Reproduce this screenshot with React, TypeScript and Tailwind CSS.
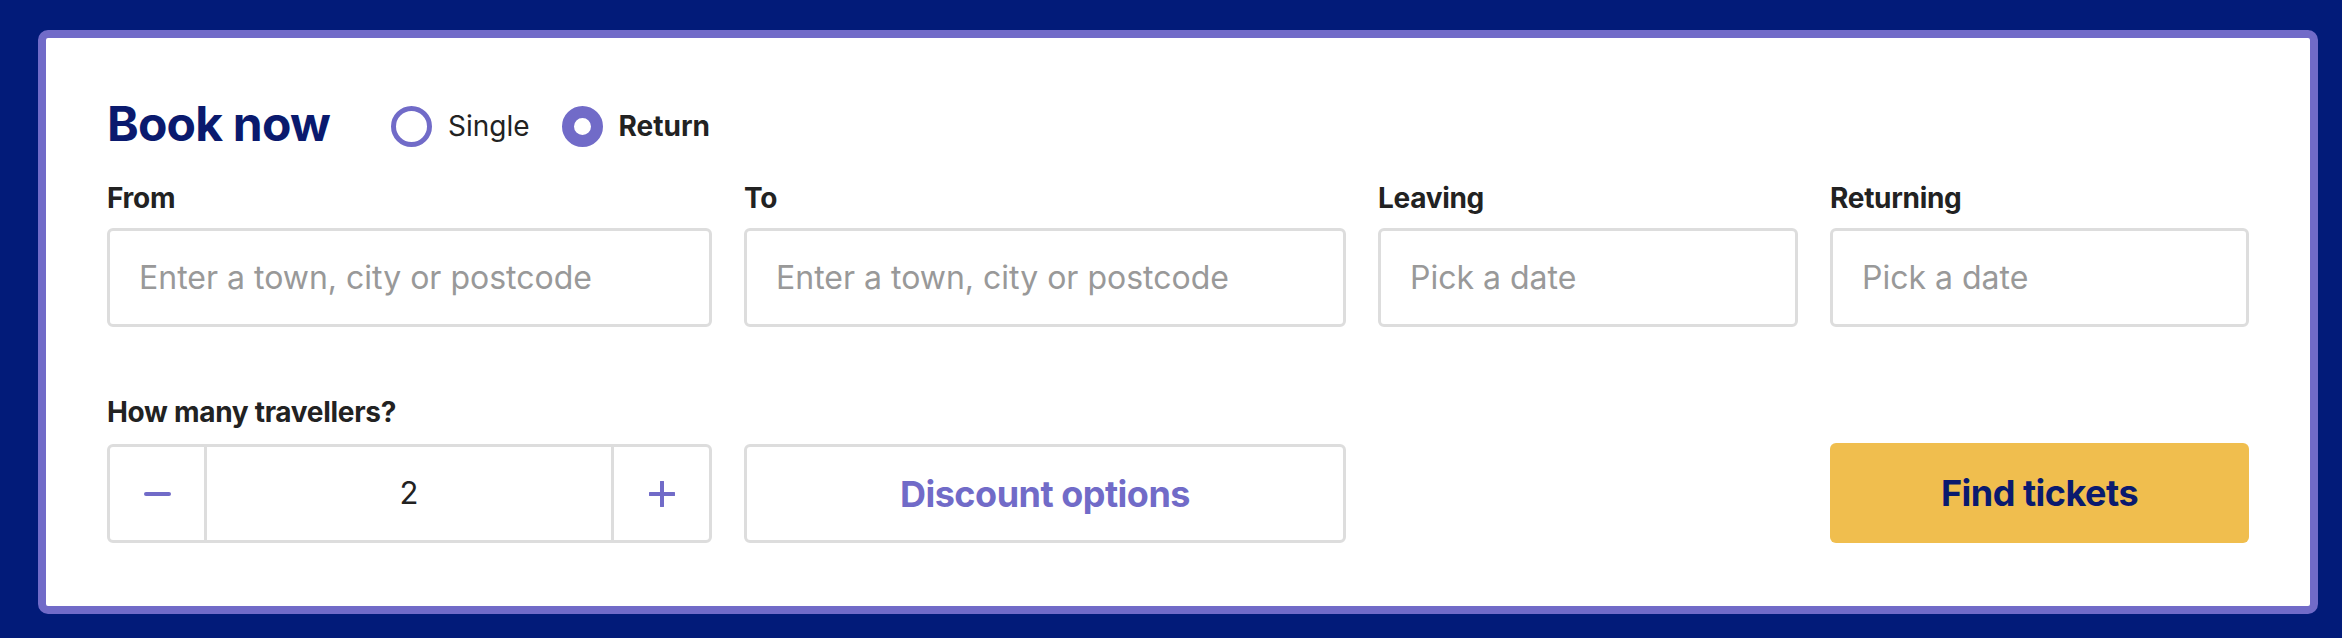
import { useState } from "react";

const font = { fontFamily: "Inter, 'Noto Sans', sans-serif" };

function Radio({ label, checked, onClick }: { label: string; checked: boolean; onClick: () => void }) {
  return (
    <button type="button" onClick={onClick} className="flex items-center gap-[16px]">
      <span
        className={`block h-[41px] w-[41px] rounded-full border-[#716BC8] bg-white ${
          checked ? "border-[12px]" : "border-[5px]"
        }`}
      />
      <span className={`text-[28px] leading-none text-[#222] ${checked ? "font-bold" : "font-normal"}`}>
        {label}
      </span>
    </button>
  );
}

function Field({ label, placeholder }: { label: string; placeholder: string }) {
  return (
    <label className="flex flex-col">
      <span className="text-[28px] font-bold leading-[30px] text-[#222] tracking-[-0.3px]">{label}</span>
      <input
        placeholder={placeholder}
        className="mt-[15px] h-[99px] w-full rounded-[6px] border-[3px] border-[#dddddd] bg-white px-[29px] text-[32px] text-[#222] outline-none placeholder:text-[#999]"
      />
    </label>
  );
}

export default function App() {
  const [trip, setTrip] = useState<"single" | "return">("return");
  const [count, setCount] = useState(2);

  return (
    <div className="min-h-[638px] bg-[#021B79] pl-[38px] pr-[24px] pt-[30px] pb-[26px]" style={font}>
      <div className="rounded-[10px] border-[8px] border-[#716BC8] bg-white px-[61px] pt-[63px] pb-[63px]">
        <div className="flex items-center">
          <h1 className="text-[48px] font-bold leading-[46px] tracking-[-0.8px] text-[#0A1A6E]">Book now</h1>
          <div className="ml-[61px] flex items-center gap-[32px] pt-[4px]">
            <Radio label="Single" checked={trip === "single"} onClick={() => setTrip("single")} />
            <Radio label="Return" checked={trip === "return"} onClick={() => setTrip("return")} />
          </div>
        </div>

        <div className="mt-[36px] grid grid-cols-[605px_602px_420px_419px] gap-x-[32px]">
          <Field label="From" placeholder="Enter a town, city or postcode" />
          <Field label="To" placeholder="Enter a town, city or postcode" />
          <Field label="Leaving" placeholder="Pick a date" />
          <Field label="Returning" placeholder="Pick a date" />
        </div>

        <div className="mt-[70px] grid grid-cols-[605px_602px_420px_419px] items-end gap-x-[32px]">
          <div className="flex flex-col">
            <span className="text-[28px] font-bold leading-[30px] text-[#222] tracking-[-0.3px]">
              How many travellers?
            </span>
            <div className="mt-[17px] flex h-[99px] rounded-[6px] border-[3px] border-[#dddddd]">
              <button
                type="button"
                onClick={() => setCount((c) => Math.max(1, c - 1))}
                className="flex w-[97px] items-center justify-center border-r-[3px] border-[#dddddd]"
              >
                <span className="block h-[4px] w-[27px] rounded-full bg-[#716BC8]" />
              </button>
              <div className="flex flex-1 items-center justify-center text-[31px] text-[#222]">{count}</div>
              <button
                type="button"
                onClick={() => setCount((c) => c + 1)}
                className="flex w-[98px] items-center justify-center border-l-[3px] border-[#dddddd]"
              >
                <svg width="26" height="26" viewBox="0 0 26 26">
                  <path d="M13 1v24M1 13h24" stroke="#716BC8" strokeWidth="4" strokeLinecap="round" />
                </svg>
              </button>
            </div>
          </div>
          <button
            type="button"
            className="h-[99px] rounded-[6px] border-[3px] border-[#dddddd] bg-white text-[36px] font-bold tracking-[-0.5px] text-[#716BC8]"
          >
            Discount options
          </button>
          <div />
          <button
            type="button"
            className="h-[100px] rounded-[6px] bg-[#F0BE4E] text-[36px] font-bold tracking-[-0.5px] text-[#0A1A6E]"
          >
            Find tickets
          </button>
        </div>
      </div>
    </div>
  );
}
